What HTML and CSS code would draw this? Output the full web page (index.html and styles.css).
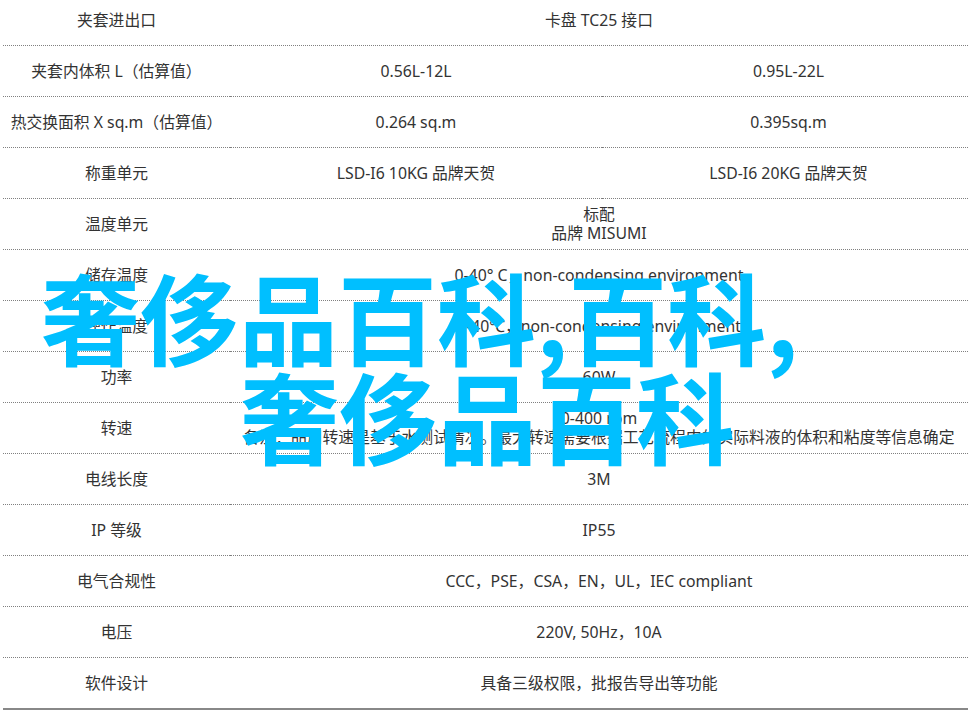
FILE: index.html
```html
<!DOCTYPE html>
<html lang="zh">
<head>
<meta charset="utf-8">
<title>奢侈品百科</title>
<link rel="stylesheet" href="styles.css">
</head>
<body>
<table class="spec">
<colgroup><col class="c1"><col class="c2"><col class="c3"></colgroup>
<tbody>
<tr><td>夹套进出口</td><td colspan="2">卡盘 TC25 接口</td></tr>
<tr><td>夹套内体积 L（估算值）</td><td>0.56L-12L</td><td class="third">0.95L-22L</td></tr>
<tr><td>热交换面积 X sq.m（估算值）</td><td>0.264 sq.m</td><td class="third">0.395sq.m</td></tr>
<tr><td>称重单元</td><td>LSD-I6 10KG 品牌天贺</td><td class="third">LSD-I6 20KG 品牌天贺</td></tr>
<tr><td>温度单元</td><td colspan="2">标配<br>品牌 MISUMI</td></tr>
<tr><td>储存温度</td><td colspan="2">0-40° C，non-condensing environment</td></tr>
<tr><td>操作温度</td><td colspan="2">0-40℃，non-condensing environment</td></tr>
<tr><td>功率</td><td colspan="2">60W</td></tr>
<tr><td>转速</td><td colspan="2">0-400 rpm<br>备注：品用转速是基于水测试情况。最大转速需要根据工艺流程中的实际料液的体积和粘度等信息确定</td></tr>
<tr><td>电线长度</td><td colspan="2">3M</td></tr>
<tr><td>IP 等级</td><td colspan="2">IP55</td></tr>
<tr><td>电气合规性</td><td colspan="2">CCC，PSE，CSA，EN，UL，IEC compliant</td></tr>
<tr><td>电压</td><td colspan="2">220V, 50Hz，10A</td></tr>
<tr><td>软件设计</td><td colspan="2">具备三级权限，批报告导出等功能</td></tr>
</tbody>
</table>
<h1 class="headline"><span class="line-a">奢侈品百科,百科,</span><span class="line-b">奢侈品百科</span></h1>
</body>
</html>
```

FILE: styles.css
```css
html, body {
  margin: 0;
  padding: 0;
  background: #fff;
}
body {
  width: 971px;
  height: 716px;
  overflow: hidden;
  position: relative;
  font-family: "Noto Sans", "Noto Sans CJK SC", sans-serif;
  color: #333;
}
.spec {
  width: 965px;
  margin: -5px 0 0 3px;
  border-collapse: separate;
  border-spacing: 0;
  table-layout: fixed;
  font-size: 15.8px;
  line-height: 19px;
}
.c1 { width: 227px; }
.c2 { width: 372px; }
.c3 { width: 366px; }
.spec td {
  height: 50px;
  padding: 0;
  text-align: center;
  vertical-align: middle;
  border-bottom: 1px dotted #808080;
  box-sizing: content-box;
}
.spec td.third {
  padding-left: 7px;
}
.spec tr:last-child td {
  border-bottom: 2px solid #888;
}
.headline {
  position: absolute;
  left: 0;
  top: 266px;
  margin: 0;
  font-family: "Noto Sans CJK SC", sans-serif;
  font-size: 99px;
  line-height: 99px;
  font-weight: 700;
  color: #00bfff;
  white-space: nowrap;
}
.line-a { display: block; margin-left: 41px; }
.line-b { display: block; margin-left: 240px; }
```
